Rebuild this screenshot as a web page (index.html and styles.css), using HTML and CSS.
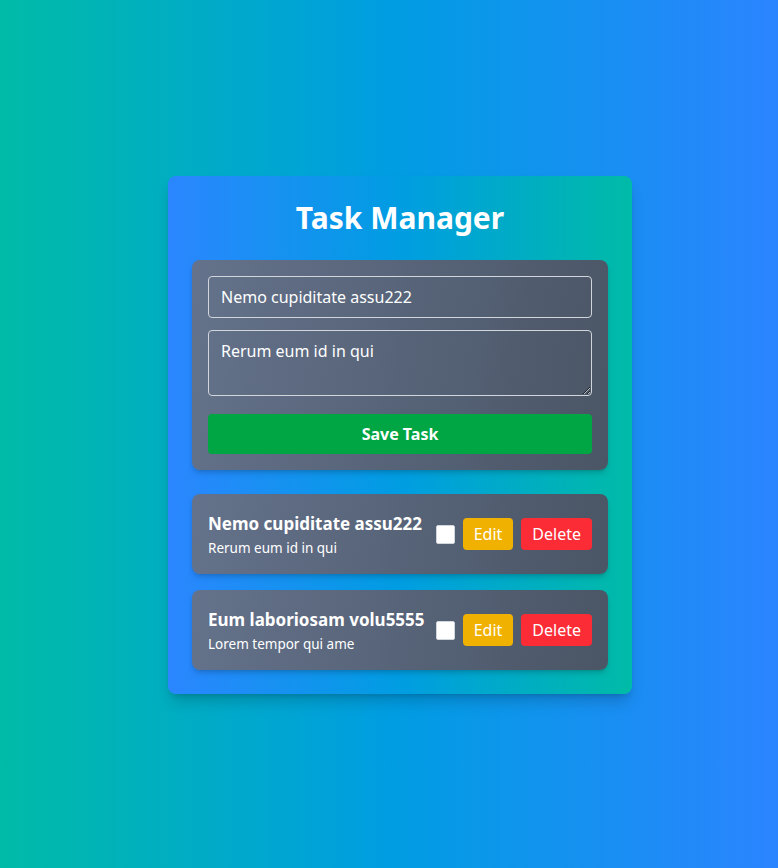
FILE: index.html
```
<!DOCTYPE html>
<html lang="en">
<head>
<meta charset="utf-8">
<title>Task Manager</title>
<link rel="stylesheet" href="styles.css">
</head>
<body>
<div class="page">
  <div class="card">
    <h1 class="title">Task Manager</h1>
    <form class="form">
      <input class="field" type="text" value="Nemo cupiditate assu222">
      <textarea class="field area">Rerum eum id in qui</textarea>
      <button class="save" type="button">Save Task</button>
    </form>
    <ul class="list">
      <li class="task">
        <div class="info">
          <div class="task-title">Nemo cupiditate assu222</div>
          <div class="task-desc">Rerum eum id in qui</div>
        </div>
        <div class="actions">
          <input class="check" type="checkbox">
          <button class="btn edit" type="button">Edit</button>
          <button class="btn del" type="button">Delete</button>
        </div>
      </li>
      <li class="task">
        <div class="info">
          <div class="task-title">Eum laboriosam volu5555</div>
          <div class="task-desc">Lorem tempor qui ame</div>
        </div>
        <div class="actions">
          <input class="check" type="checkbox">
          <button class="btn edit" type="button">Edit</button>
          <button class="btn del" type="button">Delete</button>
        </div>
      </li>
    </ul>
  </div>
</div>
</body>
</html>
```
FILE: styles.css
```
* { box-sizing: border-box; }
html, body { margin: 0; padding: 0; }
body {
  font-family: "Noto Sans", "Open Sans", sans-serif;
  color: #fff;
  background: linear-gradient(to right, #00bba7, #009de2, #2b84ff);
  min-height: 868px;
}
.page {
  min-height: 868px;
  padding-left: 22px;
  padding-top: 2px;
  display: flex;
  align-items: center;
  justify-content: center;
}
.card {
  width: 464px;
  padding: 24px;
  border-radius: 8px;
  background: linear-gradient(to right, #2b86ff, #009de2, #00bba7);
  box-shadow: 0 10px 15px -3px rgba(0,0,0,0.18), 0 4px 6px -4px rgba(0,0,0,0.18);
}
.title {
  margin: 0 0 24px;
  font-size: 30px;
  line-height: 36px;
  font-weight: 700;
  text-align: center;
}
.form {
  margin: 0 0 24px;
  padding: 16px;
  border-radius: 8px;
  background: linear-gradient(100deg, #64728b, #4a5565);
  box-shadow: 0 4px 6px -1px rgba(0,0,0,0.15), 0 2px 4px -2px rgba(0,0,0,0.15);
  display: flex;
  flex-direction: column;
}
.field {
  display: block;
  width: 100%;
  margin: 0 0 12px;
  padding: 8px 12px;
  font: inherit;
  font-size: 16px;
  line-height: 24px;
  color: #fff;
  background: transparent;
  border: 1px solid #d1d5dc;
  border-radius: 4px;
  outline: none;
}
.area {
  height: 66px;
  margin-bottom: 18px;
  resize: vertical;
}
.save {
  height: 40px;
  border: 0;
  border-radius: 4px;
  background: #00a544;
  color: #fff;
  font: inherit;
  font-size: 16px;
  font-weight: 700;
}
.list {
  list-style: none;
  margin: 0;
  padding: 0;
  display: flex;
  flex-direction: column;
  gap: 16px;
}
.task {
  display: flex;
  align-items: center;
  justify-content: space-between;
  gap: 8px;
  padding: 16px;
  border-radius: 8px;
  background: linear-gradient(100deg, #64728b, #4a5565);
  box-shadow: 0 4px 6px -1px rgba(0,0,0,0.15), 0 2px 4px -2px rgba(0,0,0,0.15);
}
.info { white-space: nowrap; min-width: 0; }
.task-title {
  font-size: 17px;
  line-height: 28px;
  font-weight: 700;
}
.task-desc {
  font-size: 13.5px;
  line-height: 20px;
}
.actions {
  display: flex;
  align-items: center;
  gap: 8px;
  flex-shrink: 0;
}
.check {
  margin: 0;
  width: 19px;
  height: 19px;
  appearance: none;
  background: #fff;
  border: 1px solid #d1d5dc;
  border-radius: 2px;
}
.btn {
  height: 32px;
  padding: 0 11px;
  border: 0;
  border-radius: 4px;
  color: #fff;
  font: inherit;
  font-size: 16px;
  line-height: 24px;
}
.edit { background: #f0b100; }
.del { background: #fb2c36; }
```
